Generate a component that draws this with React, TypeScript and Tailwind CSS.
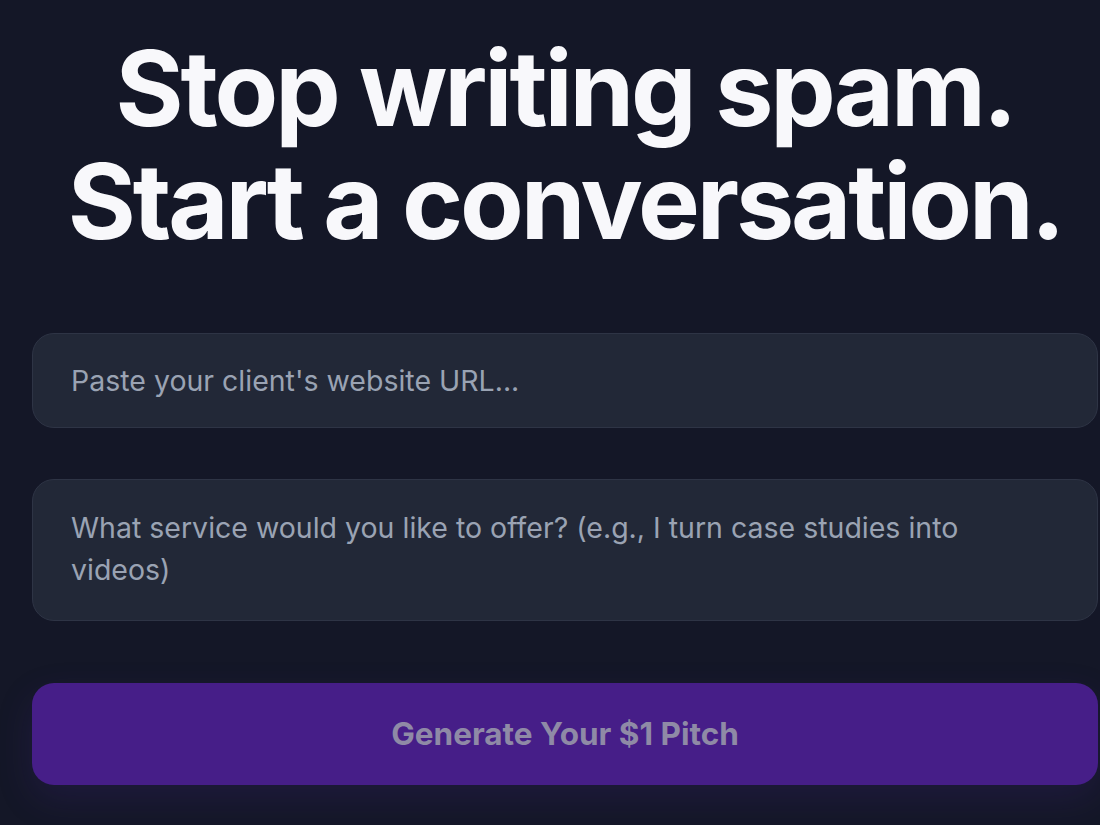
import React, { useState } from 'react';

const App: React.FC = () => {
  const [url, setUrl] = useState('');
  const [service, setService] = useState('');
  const disabled = !url || !service;

  return (
    <div
      className="min-h-screen w-full bg-[#141727] overflow-hidden"
      style={{ fontFamily: 'Inter, "Noto Sans", sans-serif' }}
    >
      <div className="ml-8 w-[1066px] pt-8 flex flex-col">
        {/* Hero */}
        <h1 className="text-center text-[104px] leading-[113px] font-bold tracking-[-0.03em] text-[#f8f8fb]">
          Stop writing spam.
          <br />
          Start a conversation.
        </h1>

        {/* Form */}
        <div className="mt-[75px] flex flex-col">
          <input
            type="text"
            value={url}
            onChange={(e) => setUrl(e.target.value)}
            placeholder="Paste your client's website URL..."
            className="h-[95px] w-full rounded-[22px] border border-[#2e3445] bg-[#222837] pl-[38px] pr-10 text-[28.5px] text-gray-200 placeholder:text-[#9aa3b3] outline-none"
          />

          <textarea
            value={service}
            onChange={(e) => setService(e.target.value)}
            placeholder="What service would you like to offer? (e.g., I turn case studies into videos)"
            rows={2}
            className="mt-[51px] h-[142px] w-full resize-none rounded-[22px] border border-[#2e3445] bg-[#222837] pl-[38px] pr-10 py-[27px] text-[28.5px] leading-[42px] text-gray-200 placeholder:text-[#9aa3b3] outline-none"
          />

          <button
            disabled={disabled}
            className="mt-[62px] h-[102px] w-full rounded-[22px] bg-[#461e88] text-[31.5px] font-bold text-[#8f8aa6] shadow-[0_14px_36px_rgba(80,40,160,0.18)]"
          >
            Generate Your $1 Pitch
          </button>
        </div>
      </div>
    </div>
  );
};

export default App;
